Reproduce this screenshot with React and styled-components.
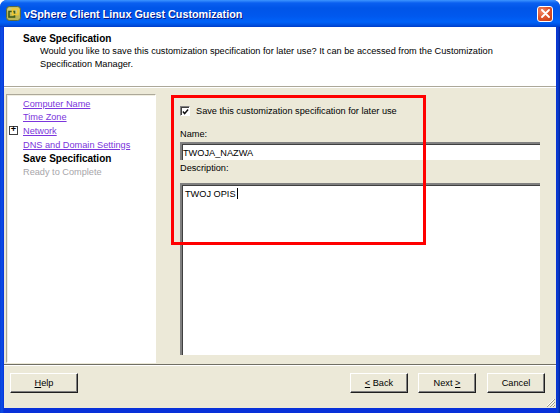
import React from 'react';
import styled, { createGlobalStyle } from 'styled-components';

const GlobalStyle = createGlobalStyle`
  html, body {
    margin: 0;
    padding: 0;
    background: #ffffff;
  }
  body {
    font-family: Tahoma, "Liberation Sans", Arial, sans-serif;
  }
`;

const steps = [
  { label: 'Computer Name', state: 'link' },
  { label: 'Time Zone', state: 'link' },
  { label: 'Network', state: 'link', expandable: true },
  { label: 'DNS and Domain Settings', state: 'link' },
  { label: 'Save Specification', state: 'current' },
  { label: 'Ready to Complete', state: 'disabled' },
];

const AppIcon = () => (
  <svg width="15" height="15" viewBox="0 0 15 15">
    <rect x="0.5" y="0.5" width="14" height="14" rx="3" fill="#b9b65a" stroke="#5e6a3a" />
    <rect x="1.5" y="1.5" width="12" height="6" rx="2" fill="#d9d58a" opacity="0.7" />
    <rect x="3" y="5.5" width="5.5" height="5.5" fill="none" stroke="#3d5a1c" strokeWidth="1.6" />
    <rect x="6.5" y="3" width="5.5" height="5.5" fill="none" stroke="#f0c830" strokeWidth="1.6" />
  </svg>
);

const CloseIcon = () => (
  <svg width="9" height="9" viewBox="0 0 9 9">
    <path d="M1 1 L8 8 M8 1 L1 8" stroke="#ffffff" strokeWidth="1.8" strokeLinecap="round" />
  </svg>
);

const CheckMark = () => (
  <svg width="8" height="8" viewBox="0 0 8 8">
    <path d="M1 3.5 L3 5.8 L7 1.2" fill="none" stroke="#111" strokeWidth="1.6" />
  </svg>
);

const Grip = () => (
  <svg width="10" height="10" viewBox="0 0 10 10">
    <path d="M9 2 L2 9 M9 5 L5 9 M9 8 L8 9" stroke="#ffffff" strokeWidth="1" />
    <path d="M10 2 L2 10 M10 5 L5 10 M10 8 L8 10" stroke="#a09e8c" strokeWidth="1" />
  </svg>
);

const App = () => {
  return (
    <>
      <GlobalStyle />
      <Frame>
        <TitleBar>
          <AppIcon />
          <Title>vSphere Client Linux Guest Customization</Title>
          <CloseButton>
            <CloseIcon />
          </CloseButton>
        </TitleBar>
        <Client>
          <Header>
            <HeaderTitle>Save Specification</HeaderTitle>
            <HeaderText>
              Would you like to save this customization specification for later use? It can be accessed from the Customization
              <br />
              Specification Manager.
            </HeaderText>
          </Header>
          <Body>
            <StepPanel>
              {steps.map((step) => (
                <StepRow key={step.label}>
                  <Expander>{step.expandable && <PlusBox>+</PlusBox>}</Expander>
                  <StepLabel state={step.state}>{step.label}</StepLabel>
                </StepRow>
              ))}
            </StepPanel>
            <Form>
              <CheckRow>
                <CheckBox>
                  <CheckMark />
                </CheckBox>
                <CheckLabel>Save this customization specification for later use</CheckLabel>
              </CheckRow>
              <FieldLabel top={12}>Name:</FieldLabel>
              <TextInput>TWOJA_NAZWA</TextInput>
              <FieldLabel top={2}>Description:</FieldLabel>
              <TextArea>
                TWOJ OPIS<Caret />
              </TextArea>
            </Form>
          </Body>
          <Footer>
            <Button width={68}>
              <span><u>H</u>elp</span>
            </Button>
            <Spacer />
            <Button width={58}>
              <span><u>&lt;</u>&nbsp;Back</span>
            </Button>
            <Button width={58} gap={10}>
              <span>Next&nbsp;<u>&gt;</u></span>
            </Button>
            <Button width={58} gap={11}>
              <span>Cancel</span>
            </Button>
          </Footer>
          <Highlight />
          <GripCorner>
            <Grip />
          </GripCorner>
        </Client>
      </Frame>
    </>
  );
};

const Frame = styled.div`
  width: 560px;
  height: 413px;
  display: flex;
  flex-direction: column;
  background: linear-gradient(to right, #0a3fd8 0, #0b4fe6 2px, #0831d9 4px, #0831d9 556px, #0a3fc9 558px, #001ea0 560px);
  border-radius: 7px 7px 0 0;
  overflow: hidden;
`;

const TitleBar = styled.div`
  height: 27px;
  flex: none;
  display: flex;
  align-items: center;
  padding-left: 6px;
  background: linear-gradient(
    to bottom,
    #3d95ff 0,
    #0a5ff0 3px,
    #0055e8 8px,
    #0058ee 16px,
    #0062f8 22px,
    #0050e0 25px,
    #003cc8 27px
  );
`;

const Title = styled.span`
  margin-left: 3px;
  color: #ffffff;
  font-family: "Trebuchet MS", "Liberation Sans", Arial, sans-serif;
  font-weight: bold;
  font-size: 10.8px;
  text-shadow: 1px 1px 0 #0a1883;
  white-space: nowrap;
`;

const CloseButton = styled.div`
  margin-left: auto;
  margin-right: 7px;
  width: 14px;
  height: 14px;
  border: 1px solid #ffffff;
  border-radius: 3px;
  display: flex;
  align-items: center;
  justify-content: center;
  background: radial-gradient(circle at 30% 30%, #f08a6a 0, #e0552e 45%, #c23a12 100%);
`;

const Client = styled.div`
  position: relative;
  flex: 1;
  min-height: 0;
  margin: 0 4px 5px;
  display: flex;
  flex-direction: column;
  background: #ece9d8;
  font-size: 9.2px;
  color: #000000;
`;

const Header = styled.div`
  height: 60px;
  flex: none;
  box-sizing: border-box;
  padding: 5px 0 0 19px;
  background: #ffffff;
  border-bottom: 1px solid #aca899;
`;

const HeaderTitle = styled.div`
  font-size: 10px;
  font-weight: bold;
  line-height: 13px;
`;

const HeaderText = styled.div`
  padding-left: 17px;
  line-height: 13px;
  white-space: nowrap;
`;

const Body = styled.div`
  flex: 1;
  min-height: 0;
  display: flex;
  padding: 7px 0 1px 2px;
  box-shadow: inset 0 1px 0 #ffffff;
`;

const StepPanel = styled.div`
  width: 150px;
  box-sizing: border-box;
  padding-top: 2px;
  background: #ffffff;
  border-top: 1px solid #aca899;
  border-left: 1px solid #aca899;
  border-right: 1px solid #ffffff;
  border-bottom: 1px solid #ffffff;
  box-shadow: inset 1px 1px 0 #f1efe2;
`;

const StepRow = styled.div`
  display: flex;
  align-items: center;
  height: 13.6px;
`;

const Expander = styled.div`
  width: 16px;
  flex: none;
  display: flex;
  align-items: center;
  padding-left: 2px;
  box-sizing: border-box;
`;

const PlusBox = styled.div`
  width: 9px;
  height: 9px;
  box-sizing: border-box;
  border: 1px solid #404040;
  font-size: 9px;
  line-height: 6px;
  font-weight: bold;
  text-align: center;
  font-family: "Liberation Mono", monospace;
`;

const StepLabel = styled.span`
  white-space: nowrap;
  font-size: ${({ state }) => (state === 'current' ? '10px' : '9.2px')};
  font-weight: ${({ state }) => (state === 'current' ? 'bold' : 'normal')};
  color: ${({ state }) => (state === 'link' ? '#7b35dc' : state === 'disabled' ? '#a7a6aa' : '#000000')};
  text-decoration: ${({ state }) => (state === 'link' ? 'underline' : 'none')};
`;

const Form = styled.div`
  width: 360px;
  margin-left: 24px;
  display: flex;
  flex-direction: column;
  padding: 12px 0 8px;
`;

const CheckRow = styled.div`
  display: flex;
  align-items: center;
  height: 10px;
`;

const CheckBox = styled.div`
  width: 10px;
  height: 10px;
  box-sizing: border-box;
  border-top: 1px solid #808080;
  border-left: 1px solid #808080;
  border-right: 1px solid #ffffff;
  border-bottom: 1px solid #ffffff;
  background: #ffffff;
  box-shadow: inset 1px 1px 0 #404040;
  display: flex;
  align-items: center;
  justify-content: center;
  padding: 1px 0 0 1px;
`;

const CheckLabel = styled.span`
  margin-left: 6px;
  white-space: nowrap;
`;

const FieldLabel = styled.div`
  margin-top: ${({ top }) => top}px;
  line-height: 12px;
`;

const sunken = `
  box-sizing: border-box;
  background: #ffffff;
  border-top: 2px solid #808080;
  border-left: 2px solid #808080;
  box-shadow: inset 1px 1px 0 #404040;
`;

const TextInput = styled.div`
  ${sunken}
  margin-top: 2px;
  height: 18px;
  padding: 3px 0 0 1px;
  line-height: 12px;
  white-space: nowrap;
`;

const TextArea = styled.div`
  ${sunken}
  margin-top: 9px;
  flex: 1;
  padding: 3px 0 0 3px;
  line-height: 12px;
  white-space: nowrap;
`;

const Caret = styled.span`
  display: inline-block;
  width: 1px;
  height: 11px;
  margin-left: 1px;
  vertical-align: -2px;
  background: #000000;
`;

const Footer = styled.div`
  height: 44px;
  flex: none;
  box-sizing: border-box;
  display: flex;
  align-items: flex-start;
  padding: 8px 11px 0 6px;
  border-top: 1px solid #716f64;
  box-shadow: inset 0 1px 0 #ffffff;
`;

const Spacer = styled.div`
  flex: 1;
`;

const Button = styled.div`
  width: ${({ width }) => width}px;
  margin-left: ${({ gap }) => gap || 0}px;
  height: 20px;
  box-sizing: border-box;
  display: flex;
  align-items: center;
  justify-content: center;
  background: #ece9d8;
  border-top: 1px solid #ffffff;
  border-left: 1px solid #ffffff;
  border-right: 1px solid #202020;
  border-bottom: 1px solid #202020;
  box-shadow: inset -1px -1px 0 #808080;
  white-space: nowrap;
  font-size: 9.2px;
`;

const Highlight = styled.div`
  position: absolute;
  left: 167px;
  top: 68px;
  width: 255px;
  height: 150px;
  box-sizing: border-box;
  border: 3px solid #ff0000;
  pointer-events: none;
`;

const GripCorner = styled.div`
  position: absolute;
  right: 1px;
  bottom: 1px;
  width: 10px;
  height: 10px;
`;

export default App;
